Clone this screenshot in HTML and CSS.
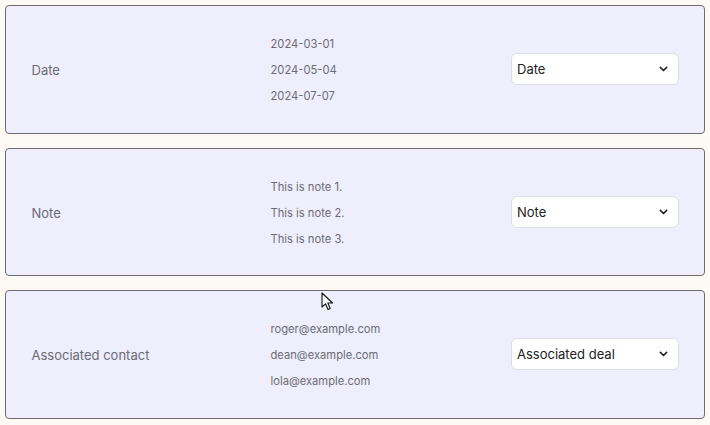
FILE: index.html
```html
<!DOCTYPE html>
<html>
<head>
<meta charset="utf-8">
<link rel="stylesheet" href="styles.css">
</head>
<body>
<div class="list">
  <div class="card">
    <div class="label">Date</div>
    <div class="values">
      <div>2024-03-01</div>
      <div>2024-05-04</div>
      <div>2024-07-07</div>
    </div>
    <div class="select"><span>Date</span><svg class="chev" viewBox="0 0 10 6" width="9" height="6"><path d="M1.5 1.2 L5 4.7 L8.5 1.2" fill="none" stroke="#222" stroke-width="1.8" stroke-linecap="round" stroke-linejoin="round"/></svg></div>
  </div>
  <div class="card">
    <div class="label">Note</div>
    <div class="values">
      <div>This is note 1.</div>
      <div>This is note 2.</div>
      <div>This is note 3.</div>
    </div>
    <div class="select"><span>Note</span><svg class="chev" viewBox="0 0 10 6" width="9" height="6"><path d="M1.5 1.2 L5 4.7 L8.5 1.2" fill="none" stroke="#222" stroke-width="1.8" stroke-linecap="round" stroke-linejoin="round"/></svg></div>
  </div>
  <div class="card">
    <div class="label">Associated contact</div>
    <div class="values">
      <div>roger@example.com</div>
      <div>dean@example.com</div>
      <div>lola@example.com</div>
    </div>
    <div class="select"><span>Associated deal</span><svg class="chev" viewBox="0 0 10 6" width="9" height="6"><path d="M1.5 1.2 L5 4.7 L8.5 1.2" fill="none" stroke="#222" stroke-width="1.8" stroke-linecap="round" stroke-linejoin="round"/></svg></div>
  </div>
</div>
<svg class="cursor" viewBox="0 0 13 19" width="13" height="19"><path d="M1 1 L1 15 L4.5 11.8 L7 17.5 L9.2 16.5 L6.8 11 L11.5 11 Z" fill="#fff" stroke="#111" stroke-width="1.1" stroke-linejoin="round"/></svg>
</body>
</html>
```
FILE: styles.css
```css
html, body {
  margin: 0;
  padding: 0;
  background: #fdfaf5;
  font-family: Inter, "Noto Sans", sans-serif;
}
body {
  width: 710px;
  height: 425px;
  overflow: hidden;
  position: relative;
}
.list {
  padding: 5px 5px 0 5px;
  display: flex;
  flex-direction: column;
  gap: 14px;
}
.card {
  box-sizing: border-box;
  height: 128.5px;
  background: #eeeefc;
  border: 1.5px solid #6c6c73;
  border-radius: 4px;
  display: flex;
  align-items: center;
  padding: 0 25.5px 0 25.5px;
}
.label {
  width: 239px;
  font-size: 13px;
  color: #6b6b74;
  padding-top: 2px;
}
.values {
  flex: 1;
  font-size: 11.2px;
  line-height: 26px;
  color: #6c6c73;
  padding-top: 2px;
}
.select {
  box-sizing: border-box;
  width: 168px;
  height: 32px;
  background: #fff;
  border: 1px solid #dedee6;
  border-radius: 6px;
  display: flex;
  align-items: center;
  justify-content: space-between;
  padding: 0 10px 0 5.5px;
  font-size: 13px;
  color: #222;
}
.chev {
  display: block;
}
.cursor {
  position: absolute;
  left: 321px;
  top: 292px;
}
```
